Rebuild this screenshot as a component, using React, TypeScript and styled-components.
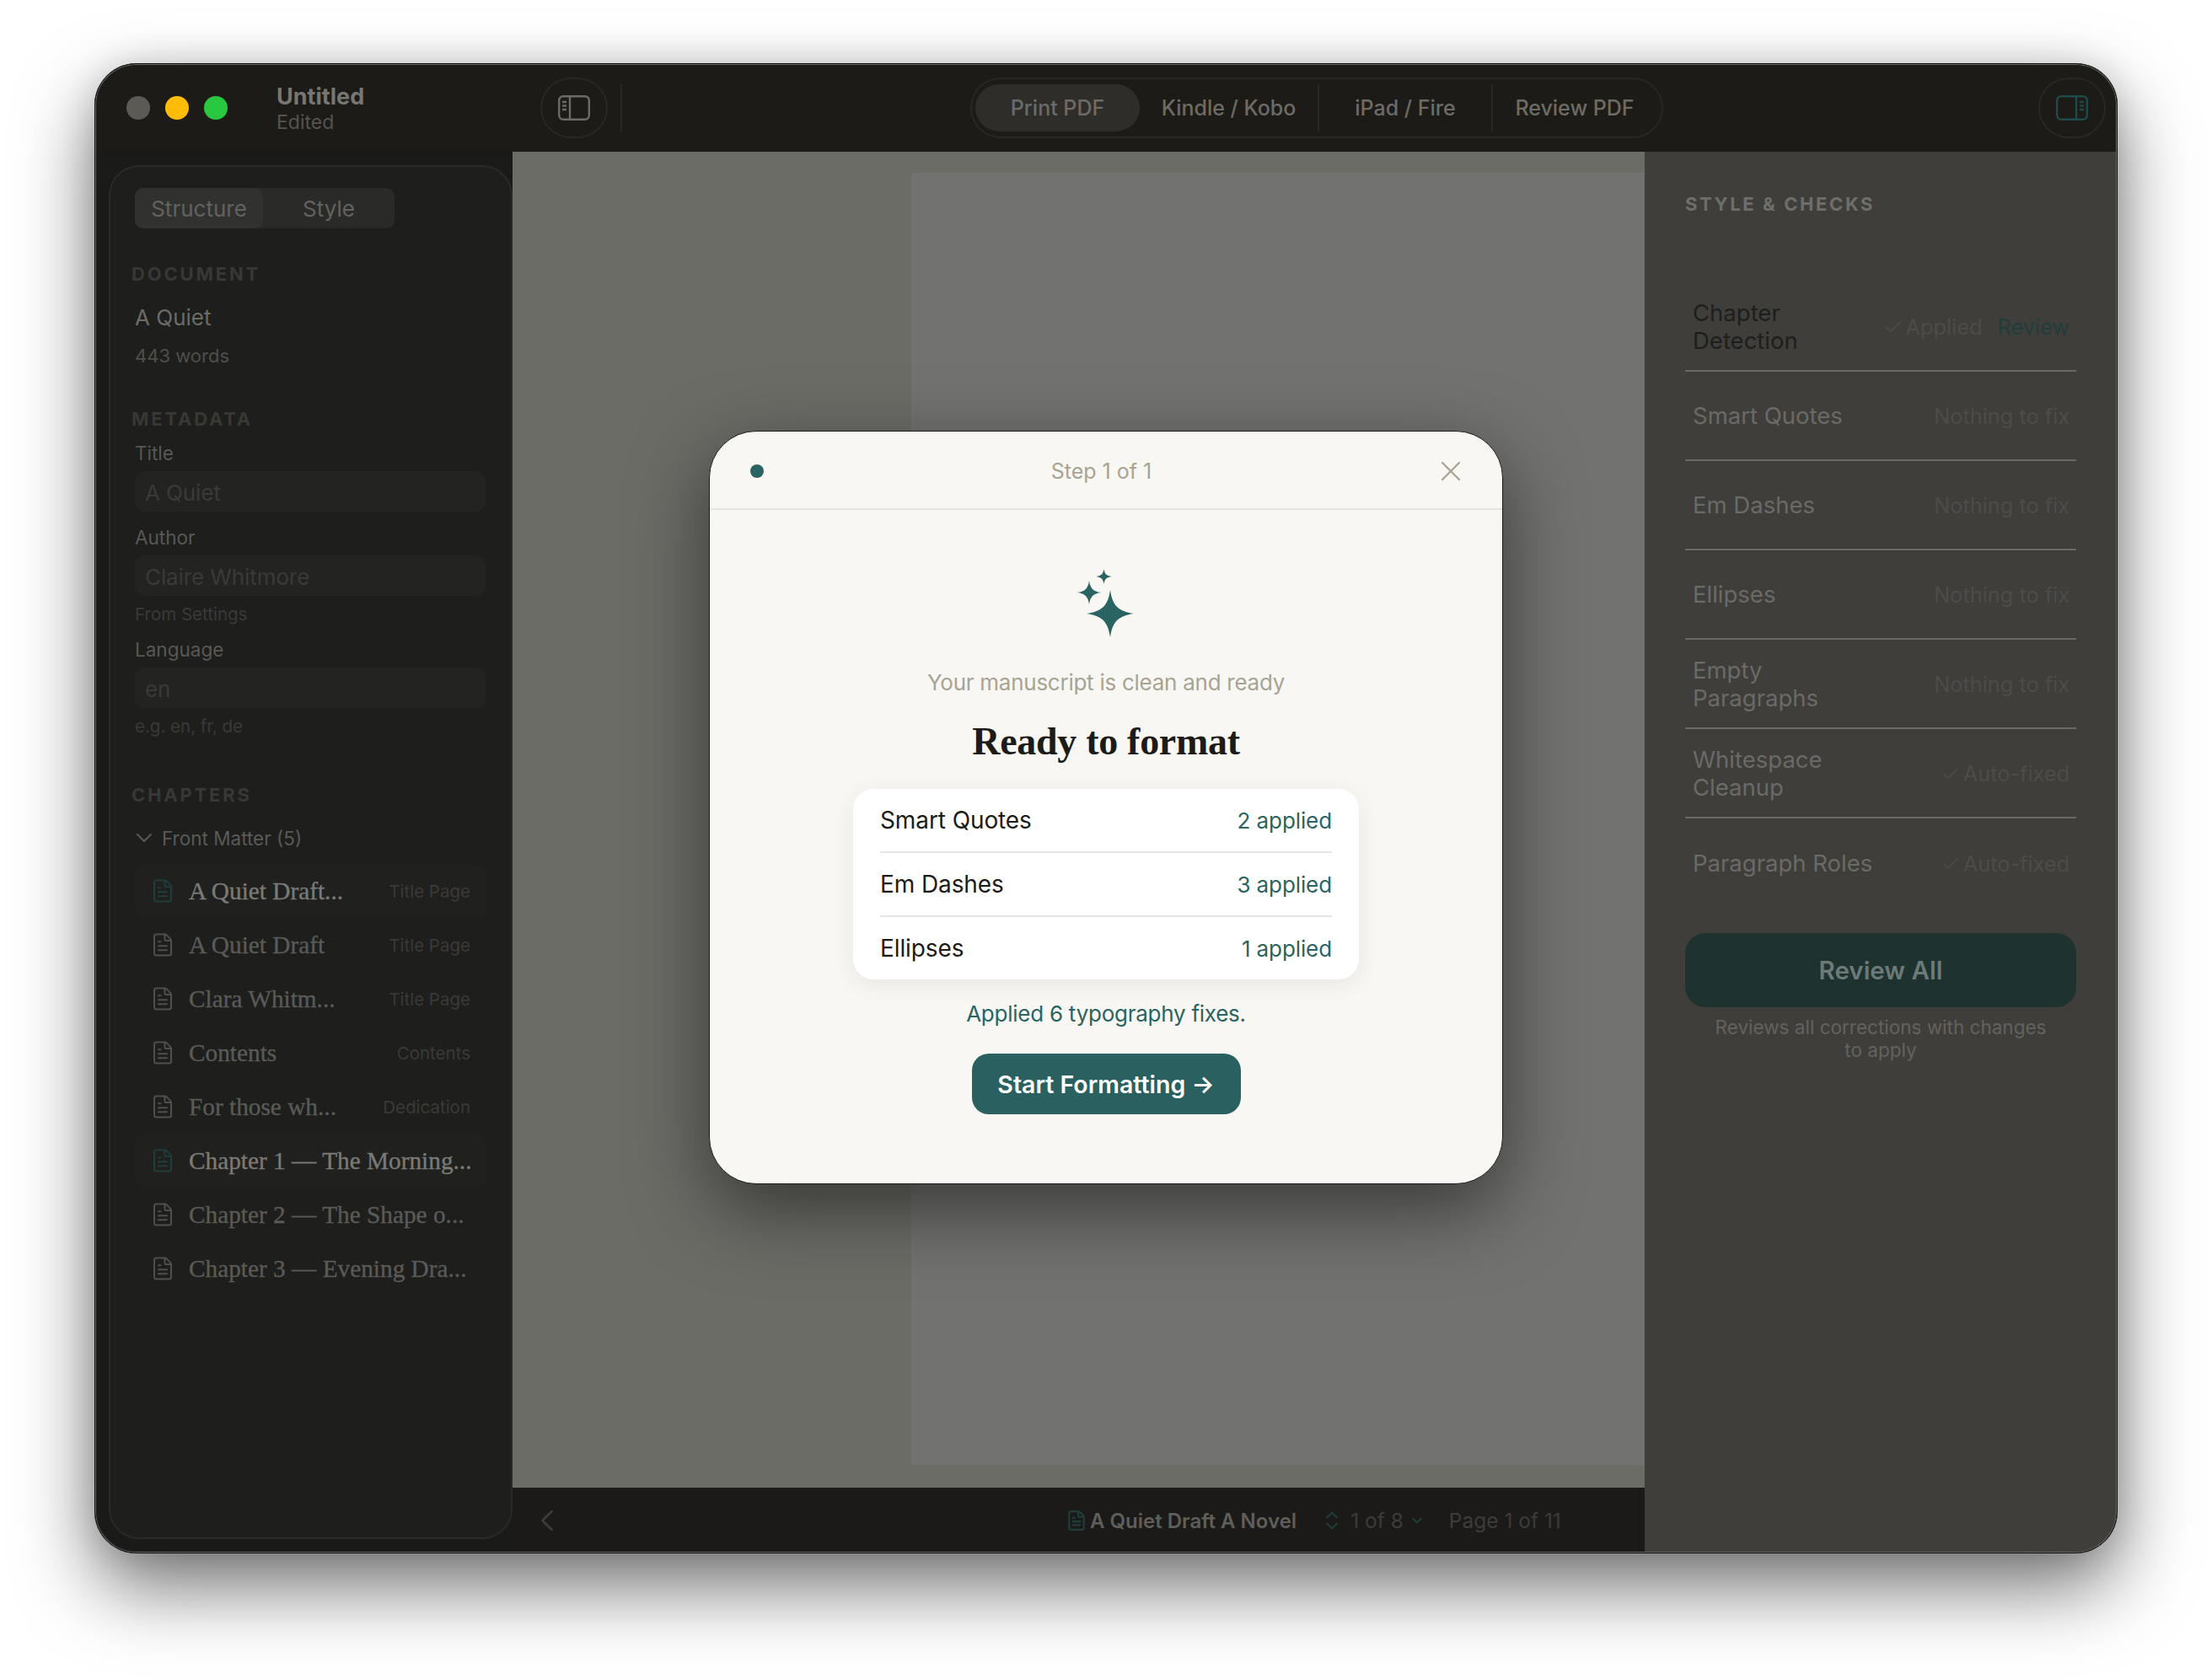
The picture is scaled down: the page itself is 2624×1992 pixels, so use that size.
import React from "react";
import styled, { createGlobalStyle } from "styled-components";
import { Check, ChevronDown, ChevronLeft, ChevronsUpDown, FileText, X } from "lucide-react";

const GlobalStyle = createGlobalStyle`
  html, body {
    margin: 0;
    padding: 0;
    background: #fff;
    font-family: Inter, "Liberation Sans", sans-serif;
  }
  * { box-sizing: border-box; }
`;

const serif = `"Liberation Serif", "DejaVu Serif", serif`;

const Stage = styled.div`
  width: 2624px;
  height: 1992px;
  padding: 75px 112px 0;
  overflow: hidden;
`;

const Window = styled.div`
  position: relative;
  width: 2400px;
  height: 1768px;
  border-radius: 50px;
  overflow: hidden;
  display: flex;
  flex-direction: column;
  background: #1b1b19;
  box-shadow: 0 40px 90px rgba(0, 0, 0, 0.55), 0 0 40px rgba(0, 0, 0, 0.12);
  &::after {
    content: "";
    position: absolute;
    inset: 0;
    border-radius: 50px;
    border: 2px solid #6b6b69;
    outline: 1px solid #0b0b0a;
    outline-offset: -1px;
    pointer-events: none;
  }
`;

const TitleBar = styled.header`
  flex: 0 0 105px;
  display: flex;
  align-items: center;
  background: #1c1b17;
  padding-left: 38px;
`;

const Light = styled.span<{ $color: string }>`
  width: 28px;
  height: 28px;
  border-radius: 50%;
  margin-right: 18px;
  background: ${(p) => p.$color};
`;

const DocTitle = styled.div`
  margin-left: 40px;
  width: 313px;
  display: flex;
  flex-direction: column;
  strong {
    font-size: 27px;
    line-height: 34px;
    font-weight: 700;
    color: #777672;
  }
  span {
    font-size: 23px;
    line-height: 26px;
    color: #55544f;
  }
`;

const RoundToggle = styled.button<{ $tint?: string }>`
  width: 80px;
  height: 72px;
  padding: 0;
  border-radius: 36px;
  border: 2px solid #282723;
  background: transparent;
  color: ${(p) => p.$tint || "#6c6b66"};
  display: flex;
  align-items: center;
  justify-content: center;
`;

const BarDivider = styled.span`
  width: 2px;
  height: 56px;
  margin-left: 15px;
  background: #282723;
`;

const Formats = styled.nav`
  margin-left: 413px;
  margin-right: 445px;
  height: 72px;
  width: 822px;
  padding: 6px 4px;
  border: 2px solid #282723;
  border-radius: 36px;
  display: flex;
  align-items: center;
`;

const FormatTab = styled.span<{ $active?: boolean; $w: number; $sep?: boolean }>`
  flex: 0 0 ${(p) => p.$w}px;
  height: 56px;
  display: flex;
  align-items: center;
  justify-content: center;
  font-size: 25px;
  font-weight: 500;
  color: #6c6b66;
  white-space: nowrap;
  background: ${(p) => (p.$active ? "#2e2d2a" : "transparent")};
  border-right: ${(p) => (p.$sep ? "2px solid #282723" : "none")};
  border-radius: ${(p) => (p.$sep ? "0" : "28px")};
`;

const Body = styled.div`
  flex: 1;
  min-height: 0;
  display: flex;
`;

const SideWrap = styled.aside`
  flex: 0 0 496px;
  min-width: 0;
  padding: 16px 0 17px 17px;
  background: #1a1a18;
`;

const SidePanel = styled.div`
  height: 100%;
  border: 2px solid #2a2a28;
  border-radius: 36px;
  background: #1e1e1c;
  padding: 25px 26px 0 29px;
`;

const Segmented = styled.div`
  width: 308px;
  height: 48px;
  border-radius: 10px;
  background: #2a2a28;
  display: flex;
`;

const Segment = styled.span<{ $active?: boolean }>`
  flex: 0 0 ${(p) => (p.$active ? 152 : 156)}px;
  padding-top: 1px;
  border-radius: 10px;
  display: flex;
  align-items: center;
  justify-content: center;
  font-size: 26px;
  color: #62625f;
  background: ${(p) => (p.$active ? "#313130" : "transparent")};
`;

const SectionLabel = styled.div<{ $top: number }>`
  margin: ${(p) => p.$top}px 0 0 -4px;
  font-size: 22px;
  line-height: 28px;
  font-weight: 700;
  letter-spacing: 2.8px;
  color: #383835;
`;

const DocName = styled.div`
  margin-top: 20px;
  font-size: 26px;
  line-height: 36px;
  color: #6b6b68;
`;

const WordCount = styled.div`
  margin-top: 11px;
  font-size: 22px;
  line-height: 32px;
  color: #4e4e4b;
`;

const FieldLabel = styled.div<{ $top: number }>`
  margin-top: ${(p) => p.$top}px;
  font-size: 22.5px;
  line-height: 30px;
  color: #585855;
`;

const FieldInput = styled.div`
  margin-top: 6px;
  width: 416px;
  height: 48px;
  padding: 2px 12px 0;
  border-radius: 12px;
  background: #232321;
  display: flex;
  align-items: center;
  font-size: 26px;
  letter-spacing: -0.1px;
  color: #3a3a38;
`;

const FieldHint = styled.div`
  margin-top: 8px;
  font-size: 20.5px;
  line-height: 28px;
  color: #3a3a38;
`;

const GroupHead = styled.div`
  margin-top: 21px;
  display: flex;
  align-items: center;
  gap: 5px;
  margin-left: -5px;
  height: 32px;
  font-size: 22.5px;
  color: #5a5a57;
`;

const ChapterList = styled.div`
  margin-top: 15px;
`;

const ChapterRow = styled.div<{ $active?: boolean }>`
  height: 64px;
  width: 418px;
  padding: 0 20px 0 18px;
  border-radius: 12px;
  display: flex;
  align-items: center;
  background: ${(p) => (p.$active ? "#20201e" : "transparent")};
  color: ${(p) => (p.$active ? "#1f3d3a" : "#4f4f4c")};
`;

const ChapterName = styled.span<{ $active?: boolean }>`
  flex: 1;
  min-width: 0;
  margin-left: 16px;
  font-family: ${serif};
  font-size: 29.3px;
  -webkit-text-stroke: 0.35px currentColor;
  color: ${(p) => (p.$active ? "#7a7a76" : "#5a5a57")};
  white-space: nowrap;
`;

const ChapterType = styled.span`
  font-size: 20.5px;
  color: #3a3a38;
  white-space: nowrap;
`;

const Main = styled.main`
  flex: 1;
  min-width: 0;
  display: flex;
  flex-direction: column;
`;

const Canvas = styled.div`
  flex: 1;
  min-height: 0;
  display: flex;
  padding: 25px 0 27px 473px;
  background: #6c6c67;
`;

const Page = styled.div`
  flex: 1;
  background: #727270;
`;

const StatusBar = styled.footer`
  flex: 0 0 78px;
  display: flex;
  align-items: center;
  padding-left: 19px;
  background: #1b1a18;
  color: #3c3c39;
  font-size: 24.5px;
`;

const StatusCluster = styled.div`
  margin-left: 593px;
  display: flex;
  align-items: center;
  white-space: nowrap;
`;

const StatusTitle = styled.span`
  margin-left: 3px;
  font-size: 24px;
  font-weight: 600;
  color: #5e5e5a;
`;

const StatusText = styled.span<{ $left: number }>`
  margin-left: ${(p) => p.$left}px;
`;

const TealMark = styled.span<{ $left: number }>`
  margin-left: ${(p) => p.$left}px;
  color: #1f3d3a;
  display: flex;
`;

const RightPanel = styled.section`
  flex: 0 0 561px;
  padding: 48px 49px 0 48px;
  background: #3f3e3b;
`;

const PanelTitle = styled.div`
  font-size: 22px;
  line-height: 28px;
  font-weight: 700;
  letter-spacing: 2.6px;
  color: #6f6e6a;
  margin-bottom: 79px;
`;

const CheckRow = styled.div<{ $last?: boolean }>`
  height: 106px;
  padding: 1px 8px 0 9px;
  display: flex;
  align-items: center;
  justify-content: space-between;
  border-bottom: ${(p) => (p.$last ? "none" : "2px solid #6a6966")};
`;

const CheckName = styled.span<{ $dark?: boolean }>`
  max-width: 225px;
  font-size: 27.5px;
  line-height: 33px;
  color: ${(p) => (p.$dark ? "#1e1e1c" : "#6b6a66")};
`;

const CheckStatus = styled.span`
  display: flex;
  align-items: center;
  gap: 3px;
  font-size: 25.3px;
  color: #4d4c49;
  white-space: nowrap;
`;

const ReviewLink = styled.span`
  margin-left: 15px;
  color: #1f3d3a;
`;

const ReviewAll = styled.button`
  display: block;
  width: 464px;
  height: 88px;
  margin-top: 30px;
  border: 0;
  border-radius: 24px;
  background: #1e3230;
  font-family: inherit;
  font-size: 29.5px;
  font-weight: 600;
  color: #6c7a78;
`;

const ReviewNote = styled.p`
  margin: 10px 30px 0;
  font-size: 22.5px;
  line-height: 27px;
  text-align: center;
  color: #63625e;
`;

const Overlay = styled.div`
  position: absolute;
  inset: 0;
  display: flex;
  align-items: center;
  justify-content: center;
`;

const Modal = styled.div`
  width: 942px;
  height: 894px;
  margin-bottom: 2px;
  border-radius: 56px;
  border: 1px solid #1a1a18;
  background: #f8f7f3;
  box-shadow: 0 30px 90px rgba(0, 0, 0, 0.5);
  display: flex;
  flex-direction: column;
  align-items: center;
`;

const ModalHead = styled.div`
  width: 100%;
  height: 93px;
  padding: 2px 41px 0 48px;
  border-bottom: 2px solid #e5e3dd;
  display: flex;
  align-items: center;
  justify-content: space-between;
  font-size: 25px;
  color: #a8a393;
  span + span {
    margin-left: 6px;
  }
`;

const StepDot = styled.span`
  width: 16px;
  height: 16px;
  border-radius: 50%;
  background: #2a6462;
`;

const SparkleArt = styled.svg`
  margin-top: 70px;
  display: block;
  color: #2a6462;
`;

const Lead = styled.p`
  margin: 35px 0 0;
  font-size: 26px;
  letter-spacing: -0.26px;
  line-height: 36px;
  color: #a8a393;
`;

const Heading = styled.h1`
  margin: 24px 0 0;
  font-family: ${serif};
  font-size: 46px;
  letter-spacing: -0.3px;
  line-height: 56px;
  font-weight: 700;
  color: #1c1b17;
`;

const FixCard = styled.div`
  width: 600px;
  margin-top: 28px;
  padding: 0 32px;
  border-radius: 24px;
  background: #fff;
  box-shadow: 0 6px 28px rgba(0, 0, 0, 0.07);
`;

const FixRow = styled.div`
  height: 76px;
  display: flex;
  align-items: center;
  justify-content: space-between;
  border-bottom: 2px solid #e5e5e3;
  font-size: 28px;
  letter-spacing: -0.1px;
  color: #1c1b17;
  &:last-child {
    height: 74px;
    border-bottom: 0;
  }
`;

const FixCount = styled.span`
  font-size: 26px;
  color: #2a6462;
`;

const Summary = styled.p`
  margin: 23px 0 0;
  font-size: 26px;
  letter-spacing: -0.25px;
  line-height: 36px;
  color: #2a6462;
`;

const StartButton = styled.button`
  width: 319px;
  height: 72px;
  margin-top: 29px;
  border: 0;
  border-radius: 20px;
  background: #2a6160;
  font-family: inherit;
  font-size: 28.5px;
  font-weight: 600;
  color: #fff;
`;

// sidebar toggle, same drawing mirrored for the right side
function PanelIcon({ flip }: { flip?: boolean }) {
  return (
    <svg
      width="38"
      height="30"
      viewBox="0 0 38 30"
      fill="none"
      stroke="currentColor"
      strokeWidth="2.4"
      style={flip ? { transform: "scaleX(-1)" } : undefined}
    >
      <rect x="1.2" y="1.2" width="35.6" height="27.6" rx="5" />
      <path d="M14 1.2v27.6M5 8h5M5 12.5h5M5 17h5" />
    </svg>
  );
}

function star(cx: number, cy: number, r: number) {
  const k = r * 0.23;
  return `M${cx} ${cy - r}C${cx + k * 0.4} ${cy - k * 1.5} ${cx + k * 1.5} ${cy - k * 0.4} ${cx + r} ${cy}
    C${cx + k * 1.5} ${cy + k * 0.4} ${cx + k * 0.4} ${cy + k * 1.5} ${cx} ${cy + r}
    C${cx - k * 0.4} ${cy + k * 1.5} ${cx - k * 1.5} ${cy + k * 0.4} ${cx - r} ${cy}
    C${cx - k * 1.5} ${cy - k * 0.4} ${cx - k * 0.4} ${cy - k * 1.5} ${cx} ${cy - r}Z`;
}

const chapters = [
  { name: "A Quiet Draft...", type: "Title Page", active: true },
  { name: "A Quiet Draft", type: "Title Page" },
  { name: "Clara Whitm...", type: "Title Page" },
  { name: "Contents", type: "Contents" },
  { name: "For those wh...", type: "Dedication" },
  { name: "Chapter 1 — The Morning...", active: true },
  { name: "Chapter 2 — The Shape o..." },
  { name: "Chapter 3 — Evening Dra..." },
];

const checks = [
  { name: "Chapter Detection", status: "Applied", tick: true, dark: true, review: true },
  { name: "Smart Quotes", status: "Nothing to fix" },
  { name: "Em Dashes", status: "Nothing to fix" },
  { name: "Ellipses", status: "Nothing to fix" },
  { name: "Empty Paragraphs", status: "Nothing to fix" },
  { name: "Whitespace Cleanup", status: "Auto-fixed", tick: true },
  { name: "Paragraph Roles", status: "Auto-fixed", tick: true },
];

const fixes = [
  ["Smart Quotes", "2 applied"],
  ["Em Dashes", "3 applied"],
  ["Ellipses", "1 applied"],
];

export default function App() {
  return (
    <Stage>
      <GlobalStyle />
      <Window>
        <TitleBar>
          <Light $color="#5b5a54" />
          <Light $color="#febc06" />
          <Light $color="#28c840" />
          <DocTitle>
            <strong>Untitled</strong>
            <span>Edited</span>
          </DocTitle>
          <RoundToggle>
            <PanelIcon />
          </RoundToggle>
          <BarDivider />
          <Formats>
            <FormatTab $active $w={195}>Print PDF</FormatTab>
            <FormatTab $w={213} $sep>Kindle / Kobo</FormatTab>
            <FormatTab $w={206} $sep>iPad / Fire</FormatTab>
            <FormatTab $w={194}>Review PDF</FormatTab>
          </Formats>
          <RoundToggle $tint="#1e4a4a">
            <PanelIcon flip />
          </RoundToggle>
        </TitleBar>
        <Body>
          <SideWrap>
            <SidePanel>
              <Segmented>
                <Segment $active>Structure</Segment>
                <Segment>Style</Segment>
              </Segmented>
              <SectionLabel $top={40}>DOCUMENT</SectionLabel>
              <DocName>A Quiet</DocName>
              <WordCount>443 words</WordCount>
              <SectionLabel $top={45}>METADATA</SectionLabel>
              <FieldLabel $top={12}>Title</FieldLabel>
              <FieldInput>A Quiet</FieldInput>
              <FieldLabel $top={16}>Author</FieldLabel>
              <FieldInput>Claire Whitmore</FieldInput>
              <FieldHint>From Settings</FieldHint>
              <FieldLabel $top={13}>Language</FieldLabel>
              <FieldInput>en</FieldInput>
              <FieldHint>e.g. en, fr, de</FieldHint>
              <SectionLabel $top={53}>CHAPTERS</SectionLabel>
              <GroupHead>
                <ChevronDown size={32} strokeWidth={1.5} />
                Front Matter (5)
              </GroupHead>
              <ChapterList>
                {chapters.map((c) => (
                  <ChapterRow key={c.name} $active={c.active}>
                    <FileText size={30} strokeWidth={1.6} />
                    <ChapterName $active={c.active}>{c.name}</ChapterName>
                    {c.type && <ChapterType>{c.type}</ChapterType>}
                  </ChapterRow>
                ))}
              </ChapterList>
            </SidePanel>
          </SideWrap>
          <Main>
            <Canvas>
              <Page />
            </Canvas>
            <StatusBar>
              <ChevronLeft size={44} strokeWidth={1.5} />
              <StatusCluster>
                <TealMark $left={0}>
                  <FileText size={26} strokeWidth={2} />
                </TealMark>
                <StatusTitle>A Quiet Draft A Novel</StatusTitle>
                <TealMark $left={28}>
                  <ChevronsUpDown size={28} strokeWidth={1.8} />
                </TealMark>
                <StatusText $left={8}>1 of 8</StatusText>
                <TealMark $left={6}>
                  <ChevronDown size={20} strokeWidth={2.4} />
                </TealMark>
                <StatusText $left={28}>Page 1 of 11</StatusText>
              </StatusCluster>
            </StatusBar>
          </Main>
          <RightPanel>
            <PanelTitle>STYLE &amp; CHECKS</PanelTitle>
            {checks.map((c, i) => (
              <CheckRow key={c.name} $last={i === checks.length - 1}>
                <CheckName $dark={c.dark}>{c.name}</CheckName>
                <CheckStatus>
                  {c.tick && <Check size={24} strokeWidth={1.6} />}
                  {c.status}
                  {c.review && <ReviewLink>Review</ReviewLink>}
                </CheckStatus>
              </CheckRow>
            ))}
            <ReviewAll>Review All</ReviewAll>
            <ReviewNote>Reviews all corrections with changes to apply</ReviewNote>
          </RightPanel>
        </Body>
        <Overlay>
          <Modal>
            <ModalHead>
              <StepDot />
              <span>Step 1 of 1</span>
              <X size={40} strokeWidth={1.4} />
            </ModalHead>
            <SparkleArt width="70" height="82" viewBox="0 0 70 82" fill="currentColor">
              <path d={star(40, 53, 28)} />
              <path d={star(15, 28, 14)} />
              <path d={star(32.5, 9, 9)} />
            </SparkleArt>
            <Lead>Your manuscript is clean and ready</Lead>
            <Heading>Ready to format</Heading>
            <FixCard>
              {fixes.map(([name, count]) => (
                <FixRow key={name}>
                  <span>{name}</span>
                  <FixCount>{count}</FixCount>
                </FixRow>
              ))}
            </FixCard>
            <Summary>Applied 6 typography fixes.</Summary>
            <StartButton>Start Formatting →</StartButton>
          </Modal>
        </Overlay>
      </Window>
    </Stage>
  );
}
